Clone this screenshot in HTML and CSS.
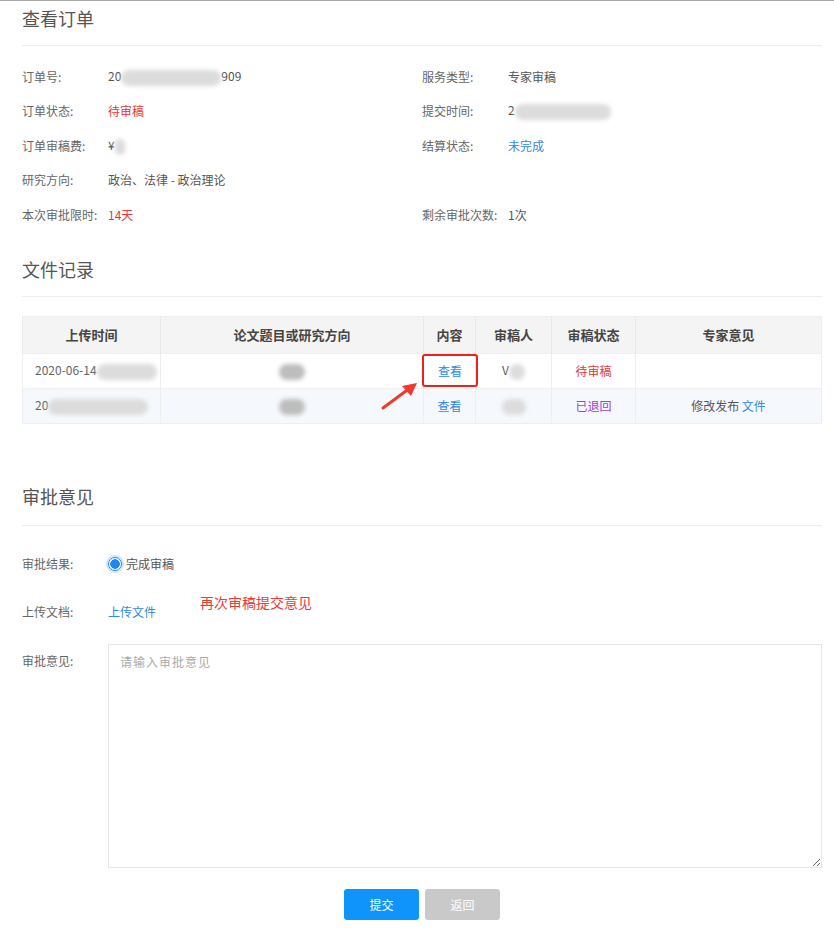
FILE: index.html
```html
<!DOCTYPE html>
<html lang="zh-CN">
<head>
  <meta charset="UTF-8" />
  <title>查看订单</title>
  <link rel="stylesheet" href="styles.css">
</head>
<body>
<div class="page">

  <!-- 订单信息 -->
  <div class="section">
    <h2 class="section-title">查看订单</h2>
    <div class="info-grid">
      <div class="info-row"><span class="label">订单号:</span><span class="value">20<i class="blur w100"></i>909</span></div>
      <div class="info-row"><span class="label">服务类型:</span><span class="value">专家审稿</span></div>
      <div class="info-row"><span class="label">订单状态:</span><span class="value red">待审稿</span></div>
      <div class="info-row"><span class="label">提交时间:</span><span class="value">2<i class="blur w96"></i></span></div>
      <div class="info-row"><span class="label">订单审稿费:</span><span class="value">¥<i class="blur w10"></i></span></div>
      <div class="info-row"><span class="label">结算状态:</span><span class="value blue">未完成</span></div>
      <div class="info-row"><span class="label">研究方向:</span><span class="value">政治、法律 - 政治理论</span></div>
      <div class="info-row"></div>
      <div class="info-row"><span class="label">本次审批限时:</span><span class="value red">14天</span></div>
      <div class="info-row"><span class="label">剩余审批次数:</span><span class="value">1次</span></div>
    </div>
  </div>

  <!-- 文件记录 -->
  <div class="section files">
    <h2 class="section-title">文件记录</h2>
    <div class="table-wrap">
      <table class="records">
        <thead>
          <tr>
            <th class="c1">上传时间</th>
            <th class="c2">论文题目或研究方向</th>
            <th class="c3">内容</th>
            <th class="c4">审稿人</th>
            <th class="c5">审稿状态</th>
            <th class="c6">专家意见</th>
          </tr>
        </thead>
        <tbody>
          <tr>
            <td class="left">2020-06-14<i class="blur w60"></i></td>
            <td><i class="blur w26"></i></td>
            <td><a class="blue mark">查看</a></td>
            <td>V<i class="blur w16"></i></td>
            <td class="red">待审稿</td>
            <td></td>
          </tr>
          <tr class="alt">
            <td class="left">20<i class="blur w100"></i></td>
            <td><i class="blur w26"></i></td>
            <td><a class="blue">查看</a></td>
            <td><i class="blur w24"></i></td>
            <td class="purple">已退回</td>
            <td>修改发布 <a class="blue">文件</a></td>
          </tr>
        </tbody>
      </table>
      <svg class="arrow" width="44" height="36" viewBox="0 0 44 36">
        <path d="M3 33 L30 13" stroke="#f03a2e" stroke-width="3" stroke-linecap="round" fill="none"/>
        <path d="M37 8 L22 11 L31 21 Z" fill="#f03a2e"/>
      </svg>
    </div>
  </div>

  <!-- 审批意见 -->
  <div class="section approve">
    <h2 class="section-title">审批意见</h2>
    <div class="form-row">
      <span class="label">审批结果:</span>
      <label class="radio"><span class="radio-dot"></span>完成审稿</label>
    </div>
    <div class="form-row upload">
      <span class="label">上传文档:</span>
      <a class="blue">上传文件</a>
      <span class="note">再次审稿提交意见</span>
    </div>
    <div class="form-row textarea-row">
      <span class="label">审批意见:</span>
      <textarea placeholder="请输入审批意见"></textarea>
    </div>
    <div class="actions">
      <button class="btn primary">提交</button>
      <button class="btn disabled">返回</button>
    </div>
  </div>

</div>
</body>
</html>
```

FILE: styles.css
```css
/* Base */
* { box-sizing: border-box; margin: 0; padding: 0; }
body {
  font-family: "Noto Sans CJK SC", "Noto Sans", sans-serif;
  font-size: 12px;
  color: #555;
  background: #fff;
  border-top: 1px solid #a8a8a8;
}
a { cursor: pointer; text-decoration: none; }

.page {
  padding: 0 12px 40px 22px;
}

/* Section titles */
.section-title {
  font-size: 18px;
  font-weight: normal;
  color: #555;
  line-height: 28px;
  padding: 3px 0 13px;
  border-bottom: 1px solid #eee;
}

/* Blurred values */
.blur {
  display: inline-block;
  height: 16px;
  vertical-align: middle;
  background: #dcdcdc;
  border-radius: 8px;
  filter: blur(2px);
}
.w10 { width: 10px; }
.w16 { width: 16px; }
.w24 { width: 24px; }
.w26 { width: 26px; background: #bdbdbd; }
.w60 { width: 60px; }
.w96 { width: 96px; }
.w100 { width: 100px; }

/* Order info */
.info-grid {
  display: grid;
  grid-template-columns: 400px 1fr;
  padding-top: 13px;
}
.info-row {
  display: flex;
  align-items: center;
  height: 34.5px;
}
.label {
  width: 86px;
  flex-shrink: 0;
  color: #666;
}
.value { color: #555; }

/* Text colours */
.red, .value.red { color: #e8363a; }
.blue, .value.blue { color: #2f89e6; }
.purple { color: #9a3ee0; }

/* Files */
.files { margin-top: 20px; }
.table-wrap {
  position: relative;
  margin-top: 19px;
}
.records {
  width: 100%;
  border-collapse: collapse;
  table-layout: fixed;
  border: 1px solid #eee;
}
.records th {
  height: 37px;
  background: #f4f4f4;
  font-size: 13px;
  font-weight: bold;
  color: #444;
  border-left: 1px solid #e8e8e8;
}
.records td {
  height: 35px;
  text-align: center;
  border-left: 1px solid #eee;
  border-top: 1px solid #f0f0f0;
}
.records td.left { text-align: left; padding-left: 12px; color: #666; }
.records tr.alt td { background: #f5f9fd; }
.c1 { width: 138px; }
.c2 { width: 263px; }
.c3 { width: 52px; }
.c4 { width: 76px; }
.c5 { width: 84px; }

.mark {
  display: inline-block;
  width: 56px;
  height: 33px;
  line-height: 29px;
  margin-left: -2px;
  border: 2px solid #e8231c;
  border-radius: 3px;
}

.arrow {
  position: absolute;
  left: 358px;
  top: 59px;
}

/* Approval form */
.approve { margin-top: 55px; }
.form-row {
  display: flex;
  align-items: center;
  height: 48px;
  color: #555;
}
.approve .section-title { padding-bottom: 15px; }
.approve .section-title + .form-row { margin-top: 14px; }
.upload { position: relative; }
.note {
  position: absolute;
  left: 178px;
  top: 4px;
  color: #ea3a38;
  font-size: 14px;
}
.radio {
  display: flex;
  align-items: center;
  gap: 4px;
}
.radio-dot {
  width: 14px;
  height: 14px;
  border-radius: 50%;
  border: 1px solid #1c86f2;
  background: radial-gradient(circle, #1c86f2 0 4.5px, #fff 5px);
  box-shadow: 0 0 0 2px #cfe4fb;
}
.textarea-row {
  align-items: flex-start;
  height: auto;
  margin-top: 8px;
}
.textarea-row .label { line-height: 34px; }
textarea {
  flex: 1;
  height: 224px;
  border: 1px solid #e6e6e6;
  padding: 8px 11px;
  font-family: inherit;
  font-size: 12px;
  color: #555;
  resize: vertical;
}
textarea::placeholder { color: #aaa; letter-spacing: 1px; }

.actions {
  display: flex;
  justify-content: center;
  gap: 6px;
  margin-top: 21px;
}
.btn {
  width: 75px;
  height: 31px;
  border: none;
  border-radius: 3px;
  color: #fff;
  font-family: inherit;
  font-size: 12px;
  cursor: pointer;
}
.btn.primary { background: #0f94fb; }
.btn.disabled { background: #c9c9c9; }
```
